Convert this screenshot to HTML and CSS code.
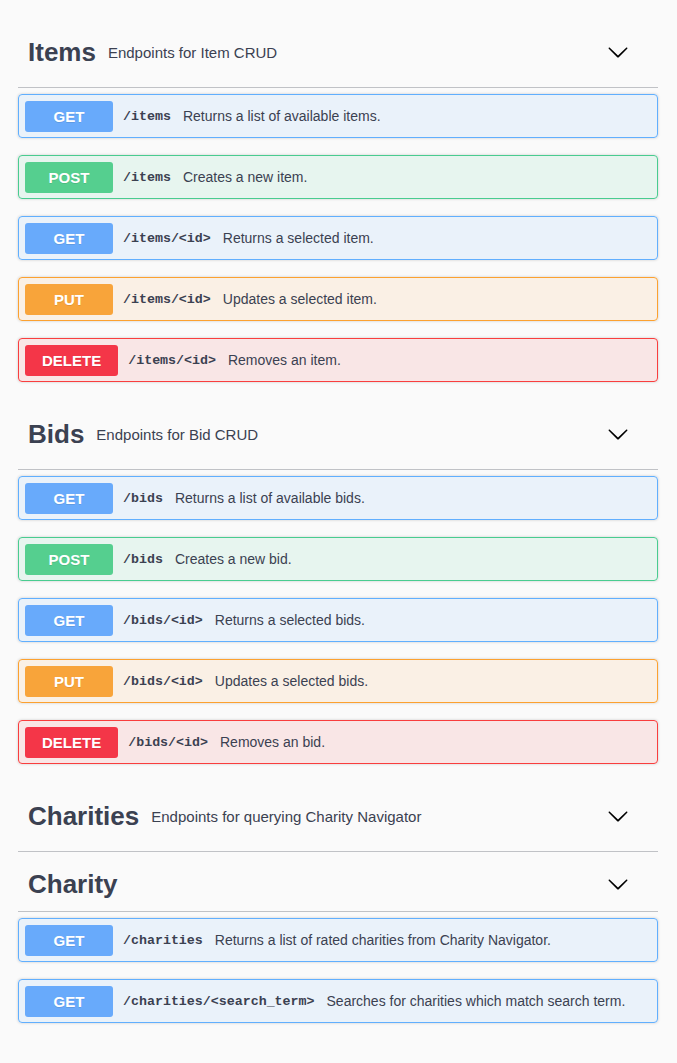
FILE: index.html
```html
<!DOCTYPE html>
<html lang="en">
<head>
<meta charset="utf-8">
<title>API</title>
<link rel="stylesheet" href="styles.css">
</head>
<body>
<div class="page">

  <section class="tag-section">
    <h3 class="tag with-desc">
      <span class="tag-name">Items</span>
      <small class="tag-desc">Endpoints for Item CRUD</small>
      <svg class="arrow" viewBox="0 0 20 20"><path d="M17.418 6.109c.272-.268.709-.268.979 0s.271.701 0 .969l-7.908 7.83c-.27.268-.707.268-.979 0l-7.908-7.830c-.27-.268-.27-.701 0-.969.271-.268.709-.268.979 0L10 13.25l7.418-7.141z"/></svg>
    </h3>
    <div class="ops">
      <div class="op op-get"><span class="method">GET</span><span class="path">/items</span><span class="desc">Returns a list of available items.</span></div>
      <div class="op op-post"><span class="method">POST</span><span class="path">/items</span><span class="desc">Creates a new item.</span></div>
      <div class="op op-get"><span class="method">GET</span><span class="path">/items/&lt;id&gt;</span><span class="desc">Returns a selected item.</span></div>
      <div class="op op-put"><span class="method">PUT</span><span class="path">/items/&lt;id&gt;</span><span class="desc">Updates a selected item.</span></div>
      <div class="op op-delete"><span class="method">DELETE</span><span class="path">/items/&lt;id&gt;</span><span class="desc">Removes an item.</span></div>
    </div>
  </section>

  <section class="tag-section">
    <h3 class="tag with-desc">
      <span class="tag-name">Bids</span>
      <small class="tag-desc">Endpoints for Bid CRUD</small>
      <svg class="arrow" viewBox="0 0 20 20"><path d="M17.418 6.109c.272-.268.709-.268.979 0s.271.701 0 .969l-7.908 7.83c-.27.268-.707.268-.979 0l-7.908-7.83c-.27-.268-.27-.701 0-.969.271-.268.709-.268.979 0L10 13.25l7.418-7.141z"/></svg>
    </h3>
    <div class="ops">
      <div class="op op-get"><span class="method">GET</span><span class="path">/bids</span><span class="desc">Returns a list of available bids.</span></div>
      <div class="op op-post"><span class="method">POST</span><span class="path">/bids</span><span class="desc">Creates a new bid.</span></div>
      <div class="op op-get"><span class="method">GET</span><span class="path">/bids/&lt;id&gt;</span><span class="desc">Returns a selected bids.</span></div>
      <div class="op op-put"><span class="method">PUT</span><span class="path">/bids/&lt;id&gt;</span><span class="desc">Updates a selected bids.</span></div>
      <div class="op op-delete"><span class="method">DELETE</span><span class="path">/bids/&lt;id&gt;</span><span class="desc">Removes an bid.</span></div>
    </div>
  </section>

  <section class="tag-section">
    <h3 class="tag with-desc">
      <span class="tag-name">Charities</span>
      <small class="tag-desc">Endpoints for querying Charity Navigator</small>
      <svg class="arrow" viewBox="0 0 20 20"><path d="M17.418 6.109c.272-.268.709-.268.979 0s.271.701 0 .969l-7.908 7.83c-.27.268-.707.268-.979 0l-7.908-7.83c-.27-.268-.27-.701 0-.969.271-.268.709-.268.979 0L10 13.25l7.418-7.141z"/></svg>
    </h3>
  </section>

  <section class="tag-section">
    <h3 class="tag no-desc">
      <span class="tag-name">Charity</span>
      <svg class="arrow" viewBox="0 0 20 20"><path d="M17.418 6.109c.272-.268.709-.268.979 0s.271.701 0 .969l-7.908 7.83c-.27.268-.707.268-.979 0l-7.908-7.83c-.27-.268-.27-.701 0-.969.271-.268.709-.268.979 0L10 13.25l7.418-7.141z"/></svg>
    </h3>
    <div class="ops">
      <div class="op op-get"><span class="method">GET</span><span class="path">/charities</span><span class="desc">Returns a list of rated charities from Charity Navigator.</span></div>
      <div class="op op-get"><span class="method">GET</span><span class="path">/charities/&lt;search_term&gt;</span><span class="desc">Searches for charities which match search term.</span></div>
    </div>
  </section>

</div>
</body>
</html>
```

FILE: styles.css
```css
html, body {
  margin: 0;
  padding: 0;
  background: #fafafa;
}

body {
  font-family: "Liberation Sans", Arial, Helvetica, sans-serif;
  color: #3b4151;
}

.page {
  padding: 17px 19px 20px 18px;
}

.tag-section {
  display: flex;
  flex-direction: column;
}

.tag {
  display: flex;
  align-items: center;
  box-sizing: border-box;
  height: 60px;
  margin: 0;
  padding: 0 29px 0 10px;
  border-bottom: 1px solid rgba(59, 65, 81, 0.3);
  font-weight: normal;
}

.tag.with-desc {
  height: 71px;
}

.tag.no-desc {
  padding-top: 5px;
}

.tag-name {
  font-size: 26px;
  font-weight: bold;
  color: #3b4151;
  white-space: nowrap;
}

.tag-desc {
  flex: 1;
  padding-left: 12px;
  font-size: 15px;
  color: #3b4151;
}

.arrow {
  width: 22px;
  height: 22px;
  margin-left: auto;
  fill: #000;
  flex: none;
}

.ops {
  display: flex;
  flex-direction: column;
  padding-top: 6px;
}

.op {
  display: flex;
  align-items: center;
  box-sizing: border-box;
  height: 44px;
  margin-bottom: 17px;
  padding: 0 6px;
  border: 1px solid;
  border-radius: 4px;
  box-shadow: 0 0 3px rgba(0, 0, 0, 0.19);
}

.method {
  display: flex;
  align-items: center;
  justify-content: center;
  box-sizing: border-box;
  min-width: 88px;
  height: 31px;
  padding: 0 17px;
  border-radius: 3px;
  color: #fff;
  font-size: 15px;
  font-weight: bold;
  text-shadow: 0 1px 0 rgba(0, 0, 0, 0.1);
}

.path {
  margin-left: 10px;
  font-family: "Liberation Mono", "Courier New", monospace;
  font-size: 13.3px;
  font-weight: bold;
  color: #3b4151;
  white-space: nowrap;
}

.desc {
  margin-left: 12px;
  font-size: 14px;
  color: #3b4151;
  white-space: nowrap;
}

.op-get {
  background: rgba(97, 175, 254, 0.1);
  border-color: #61affe;
}
.op-get .method { background: #68aafb; }

.op-post {
  background: rgba(73, 204, 144, 0.1);
  border-color: #49cc90;
}
.op-post .method { background: #55cf8f; }

.op-put {
  background: rgba(252, 161, 48, 0.1);
  border-color: #fca130;
}
.op-put .method { background: #f8a43a; }

.op-delete {
  background: rgba(249, 62, 62, 0.1);
  border-color: #f93e3e;
}
.op-delete .method { background: #f43648; }
```
